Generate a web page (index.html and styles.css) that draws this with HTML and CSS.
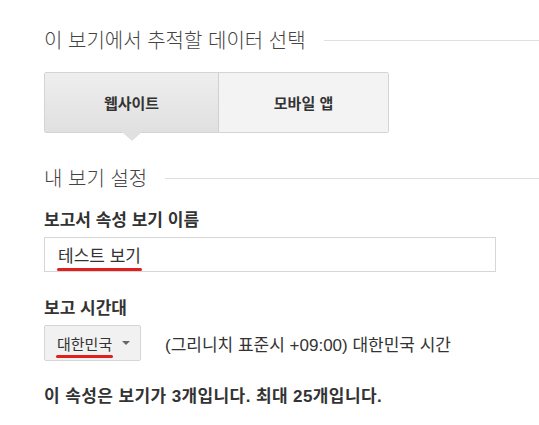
FILE: index.html
```html
<!DOCTYPE html>
<html lang="ko">
<head>
  <meta charset="UTF-8">
  <title>보기 설정</title>
  <link rel="stylesheet" href="styles.css">
</head>
<body>
  <div class="page">
    <!-- 추적 데이터 선택 -->
    <h2 class="section-title">이 보기에서 추적할 데이터 선택</h2>
    <div class="tabs">
      <div class="tab tab-active">웹사이트</div>
      <div class="tab">모바일 앱</div>
    </div>

    <!-- 보기 설정 -->
    <h2 class="section-title title-second">내 보기 설정</h2>

    <label class="field-label">보고서 속성 보기 이름</label>
    <div class="text-input"><span class="mark">테스트 보기</span></div>

    <label class="field-label label-tz">보고 시간대</label>
    <div class="tz-row">
      <div class="select-btn"><span class="mark">대한민국</span><span class="caret"></span></div>
      <span class="tz-text">(그리니치 표준시 +09:00) 대한민국 시간</span>
    </div>

    <p class="note">이 속성은 보기가 3개입니다. 최대 25개입니다.</p>
  </div>
</body>
</html>
```

FILE: styles.css
```css
body { margin: 0; background: #fff; font-family: "Noto Sans CJK KR", "Noto Sans", sans-serif; color: #333; }
.page { padding: 26px 0 0 44px; }

.section-title { display: flex; align-items: center; margin: 0; font-size: 20px; font-weight: 300; color: #444; line-height: 28px; }
.section-title::after { content: ""; flex: 1; height: 1px; background: #e0e0e0; margin-left: 18px; }
.title-second { margin-top: 31px; }

.tabs { display: flex; width: 345px; height: 61px; margin-top: 18px; border: 1px solid #d4d4d4; border-radius: 2px; box-sizing: border-box; }
.tab { position: relative; flex: 1; display: flex; align-items: center; justify-content: center; font-size: 15px; font-weight: bold; color: #333; background: #f3f3f3; }
.tab-active { flex: 0 0 173px; background: linear-gradient(#eeeeee, #e0e0e0); border-right: 1px solid #d0d0d0; }
.tab-active::after { content: ""; position: absolute; left: 50%; bottom: -9px; margin-left: -10px; border-left: 10px solid transparent; border-right: 10px solid transparent; border-top: 9px solid #e0e0e0; }

.field-label { display: block; margin-top: 16px; font-size: 17px; font-weight: bold; color: #333; line-height: 22px; }
.label-tz { margin-top: 24px; }

.text-input { width: 452px; height: 35px; margin-top: 7px; border: 1px solid #d6d6d6; box-sizing: border-box; padding: 0 13px; display: flex; align-items: center; font-size: 17px; color: #333; }

.mark { position: relative; }
.mark::after { content: ""; position: absolute; left: -1px; right: -1px; bottom: -4px; height: 3px; border-radius: 2px; background: #e0201f; }

.tz-row { display: flex; align-items: center; margin-top: 7px; }
.select-btn { display: flex; align-items: center; flex: 0 0 97px; height: 36px; padding: 0 0 0 12px; box-sizing: border-box; border: 1px solid #d6d6d6; border-radius: 2px; background: #f1f1f1; font-size: 15px; color: #333; white-space: nowrap; }
.caret { width: 0; height: 0; margin-left: 10px; border-left: 4px solid transparent; border-right: 4px solid transparent; border-top: 4px solid #666; }
.tz-text { margin-left: 24px; font-family: "Liberation Sans", "Noto Sans CJK KR", sans-serif; font-size: 17px; color: #333; white-space: nowrap; }

.note { margin: 25px 0 0; font-family: "Liberation Sans", "Noto Sans CJK KR", sans-serif; font-size: 17px; font-weight: bold; color: #333; line-height: 22px; letter-spacing: 0.4px; }
```
